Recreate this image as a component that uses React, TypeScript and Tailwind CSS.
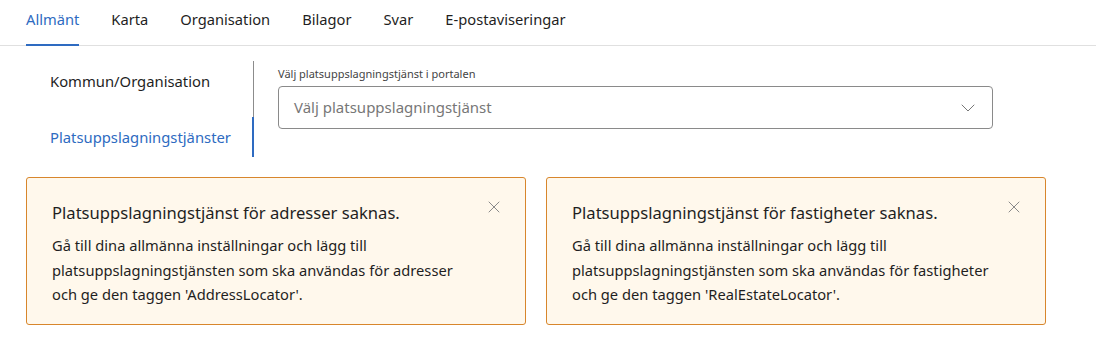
import { X, ChevronDown } from "lucide-react";

const tabs = ["Allmänt", "Karta", "Organisation", "Bilagor", "Svar", "E-postaviseringar"];

const alerts = [
    {
        title: "Platsuppslagningstjänst för adresser saknas.",
        body: "Gå till dina allmänna inställningar och lägg till platsuppslagningstjänsten som ska användas för adresser och ge den taggen 'AddressLocator'.",
    },
    {
        title: "Platsuppslagningstjänst för fastigheter saknas.",
        body: "Gå till dina allmänna inställningar och lägg till platsuppslagningstjänsten som ska användas för fastigheter och ge den taggen 'RealEstateLocator'.",
    },
];

function Alert({ title, body }: { title: string; body: string }) {
    return (
        <div className="w-[500px] h-[148px] rounded-[3px] border border-[#d8862c] bg-[#fff8ec] flex pl-[25px] pr-[21px] pt-[23px]">
            <div className="w-[420px]">
                <h3 className="text-[16.6px] leading-[24px] text-[#1f1f1f]">{title}</h3>
                <p className="mt-[8px] text-[14.7px] leading-[24.5px] text-[#1f1f1f]">{body}</p>
            </div>
            <button className="ml-auto -mt-[4px] h-[20px] text-[#8a8a8a]">
                <X className="w-[20px] h-[20px]" strokeWidth={1.2} />
            </button>
        </div>
    );
}

export default function App() {
    return (
        <div className="w-[1096px] h-[350px] bg-white overflow-hidden font-['Noto_Sans',sans-serif] text-[#1f1f1f]">
            {/* Tabs */}
            <nav className="flex border-b border-[#e0e0e0] pl-[26px] gap-[32px]">
                {tabs.map((t, i) => (
                    <div
                        key={t}
                        className={`h-[46px] pt-[9px] text-[14.7px] leading-[20px] -mb-px ${
                            i === 0 ? "text-[#2e6bc1] border-b-2 border-[#2e6bc1]" : "text-[#1f1f1f]"
                        }`}
                    >
                        {t}
                    </div>
                ))}
            </nav>

            <div className="flex pl-[26px] mt-[15px]">
                {/* Side nav */}
                <div className="w-[228px] flex flex-col gap-[16px] border-r border-[#8c8c8c] h-[96px]">
                    <div className="h-[40px] flex items-center pl-[24px] text-[14.8px]">Kommun/Organisation</div>
                    <div className="h-[40px] flex items-center pl-[24px] text-[14.8px] text-[#2e6bc1] border-r-2 border-[#2e6bc1] -mr-px">
                        Platsuppslagningstjänster
                    </div>
                </div>

                {/* Select */}
                <div className="pl-[24px]">
                    <label className="block text-[11px] leading-[14px] text-[#444] mt-[6px]">
                        Välj platsuppslagningstjänst i portalen
                    </label>
                    <div className="mt-[5px] w-[715px] h-[43px] rounded-[4px] border border-[#8a8a8a] flex items-center pl-[15px] pr-[12px]">
                        <span className="text-[15px] text-[#777]">Välj platsuppslagningstjänst</span>
                        <ChevronDown className="ml-auto w-[24px] h-[24px] text-[#777]" strokeWidth={1} />
                    </div>
                </div>
            </div>

            {/* Alerts */}
            <div className="flex gap-[20px] pl-[26px] mt-[20px]">
                {alerts.map((a) => (
                    <Alert key={a.title} {...a} />
                ))}
            </div>
        </div>
    );
}
